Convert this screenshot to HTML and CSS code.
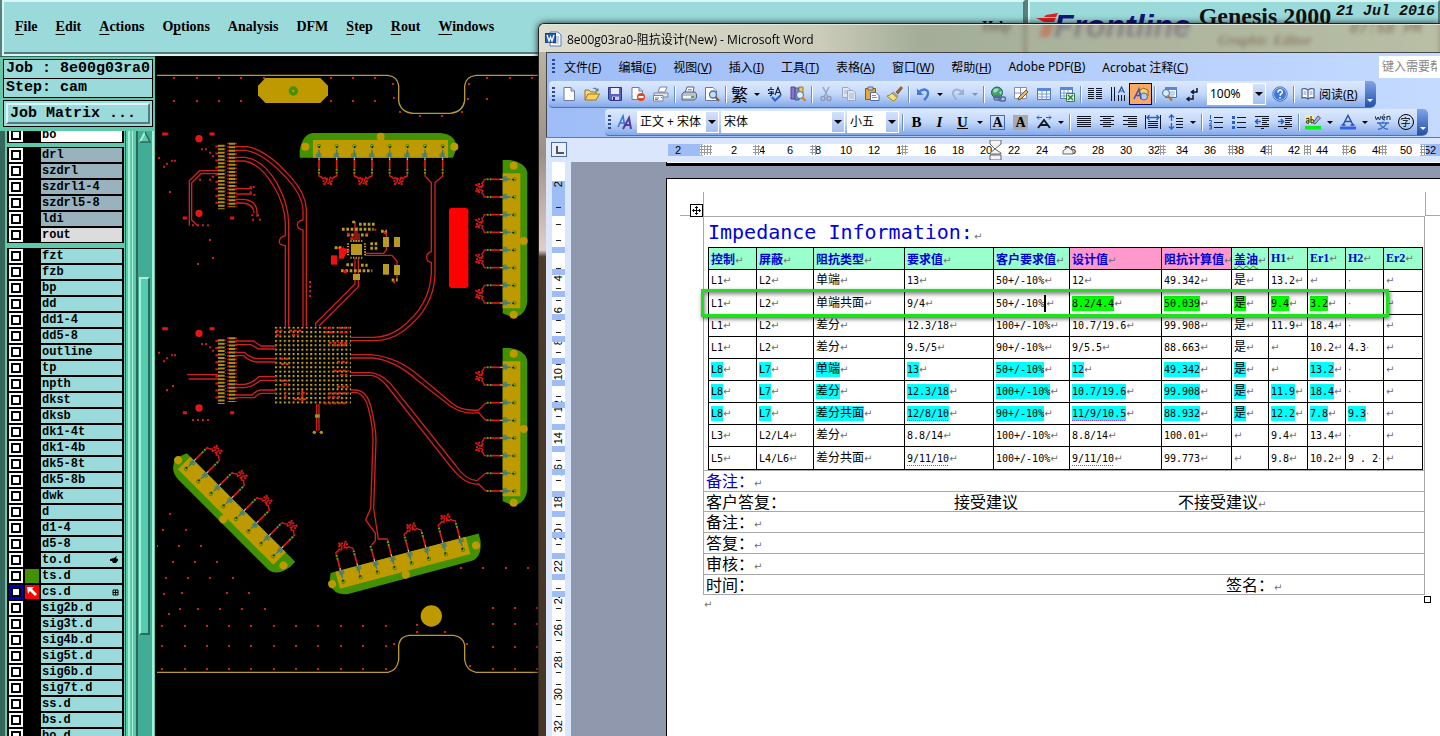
FILE: index.html
```html
<!DOCTYPE html>
<html lang="zh-CN">
<head>
<meta charset="utf-8">
<title>Genesis 2000 - Microsoft Word</title>
<link rel="stylesheet" href="styles.css">
</head>
<body>
<div class="genesis">
  <header class="gen-head">
    <nav class="gen-menu">
      <button><u>F</u>ile</button><button><u>E</u>dit</button><button><u>A</u>ctions</button><button>O<u>p</u>tions</button><button>Analysis</button><button>DFM</button><button><u>S</u>tep</button><button><u>R</u>out</button><button><u>W</u>indows</button><button class="help">Help</button>
    </nav>
    <div class="brand">
      <div class="logo">
        <svg width="22" height="24" viewBox="0 0 22 24"><path d="M10 2L22 0 20 4 8 4zM0 5H20L18 9H8zM5 11H18L13 24H3L7 13z" fill="#e02020"/></svg>
        <span>Frontline</span>
      </div>
      <div class="product"><strong>Genesis 2000</strong><em>Graphic Editor</em></div>
      <div class="clock"><span>21 Jul 2016</span><span>07:58 PM</span></div>
    </div>
  </header>
  <div class="gen-main">
    <aside class="side">
      <div class="field">Job : 8e00g03ra0</div>
      <div class="field">Step: cam</div>
      <div class="btn-frame"><button class="matrix">Job Matrix ...</button></div>
      <div class="layers">
        <div class="list">
          <div class="group first">
            <label class="row white"><input type="checkbox"><i></i><span>bo</span></label>
          </div>
          <div class="group gray">
            <label class="row"><input type="checkbox"><i></i><span>drl</span></label>
            <label class="row"><input type="checkbox"><i></i><span>szdrl</span></label>
            <label class="row"><input type="checkbox"><i></i><span>szdrl1-4</span></label>
            <label class="row"><input type="checkbox"><i></i><span>szdrl5-8</span></label>
            <label class="row"><input type="checkbox"><i></i><span>ldi</span></label>
            <label class="row pale"><input type="checkbox"><i></i><span>rout</span></label>
          </div>
          <div class="group">
            <label class="row"><input type="checkbox"><i></i><span>fzt</span></label>
            <label class="row"><input type="checkbox"><i></i><span>fzb</span></label>
            <label class="row"><input type="checkbox"><i></i><span>bp</span></label>
            <label class="row"><input type="checkbox"><i></i><span>dd</span></label>
            <label class="row"><input type="checkbox"><i></i><span>dd1-4</span></label>
            <label class="row"><input type="checkbox"><i></i><span>dd5-8</span></label>
            <label class="row"><input type="checkbox"><i></i><span>outline</span></label>
            <label class="row"><input type="checkbox"><i></i><span>tp</span></label>
            <label class="row"><input type="checkbox"><i></i><span>npth</span></label>
            <label class="row"><input type="checkbox"><i></i><span>dkst</span></label>
            <label class="row"><input type="checkbox"><i></i><span>dksb</span></label>
            <label class="row"><input type="checkbox"><i></i><span>dk1-4t</span></label>
            <label class="row"><input type="checkbox"><i></i><span>dk1-4b</span></label>
            <label class="row"><input type="checkbox"><i></i><span>dk5-8t</span></label>
            <label class="row"><input type="checkbox"><i></i><span>dk5-8b</span></label>
            <label class="row"><input type="checkbox"><i></i><span>dwk</span></label>
            <label class="row"><input type="checkbox"><i></i><span>d</span></label>
            <label class="row"><input type="checkbox"><i></i><span>d1-4</span></label>
            <label class="row"><input type="checkbox"><i></i><span>d5-8</span></label>
            <label class="row"><input type="checkbox"><i></i><span>to.d<svg width="9" height="8" viewBox="0 0 9 8"><path d="M0 3L4 2 7 0 6 2.500 8 3V4.500L6 7H3L2 5H0z"/></svg></span></label>
            <label class="row"><input type="checkbox"><i class="green"></i><span>ts.d</span></label>
            <label class="row"><input type="checkbox" checked><i class="red"><svg width="14" height="14" viewBox="0 0 14 14"><path d="M2 2H9L7 4 12 9 10 11 5 6 3 9z" fill="#fff"/></svg></i><span>cs.d<svg width="7" height="7" viewBox="0 0 7 7"><path d="M1 1H6V6H1zM3.500 1V6M1 3.500H6" fill="none" stroke="#000"/></svg></span></label>
            <label class="row"><input type="checkbox"><i></i><span>sig2b.d</span></label>
            <label class="row"><input type="checkbox"><i></i><span>sig3t.d</span></label>
            <label class="row"><input type="checkbox"><i></i><span>sig4b.d</span></label>
            <label class="row"><input type="checkbox"><i></i><span>sig5t.d</span></label>
            <label class="row"><input type="checkbox"><i></i><span>sig6b.d</span></label>
            <label class="row"><input type="checkbox"><i></i><span>sig7t.d</span></label>
            <label class="row"><input type="checkbox"><i></i><span>ss.d</span></label>
            <label class="row"><input type="checkbox"><i></i><span>bs.d</span></label>
            <label class="row"><input type="checkbox"><i></i><span>bo.d</span></label>
          </div>
        </div>
        <div class="rails"></div>
        <div class="scroll">
          <svg width="12" height="12" viewBox="0 0 12 12"><path d="M6 1L1 11H11z" fill="#5fc9ab"/><path d="M6 1L1 11" stroke="#a5efdb" stroke-width="2"/><path d="M6 1L11 11H1" stroke="#2a6a5c" stroke-width="1.500" fill="none"/></svg>
          <div class="thumb"></div>
        </div>
      </div>
    </aside>
    <main class="board">
      <svg width="383" height="679" viewBox="0 -3 383 679">
        <defs>
          <pattern id="bga" x="354" y="800" width="13.200" height="13.200" patternUnits="userSpaceOnUse"><rect width="6" height="6" fill="#c0a030"/></pattern>
          <g id="pin">
            <path d="M0 6L-6 32H6z" fill="#4a7f86"/><path d="M-8 32V24H8M-8 32H8M0 32V12" stroke="#4a7f60" stroke-width="3" fill="none"/>
            <circle r="5" fill="none" stroke="#419100" stroke-width="3"/><rect x="-1" width="4" height="6" fill="#201000"/>
            <path d="M0 38V68" stroke="#e01818" stroke-width="5"/><path d="M0 35V42" stroke="#ccc" stroke-width="3"/>
            <path d="M0 68V84" stroke="#6f9a18" stroke-width="6" stroke-dasharray="6 3"/>
          </g>
          <g id="body">
            <path d="M-18 -39H364Q408 -36 414 4L402 35H-58V14Q-50 -36 -18 -39z" fill="#419100"/>
            <path d="M-18 -18H387V35H-18z" fill="#bf9900"/>
            <circle cx="185" cy="-28" r="12" fill="#bf9900"/><circle cx="-41" cy="2" r="12" fill="#bf9900"/><circle cx="406" cy="2" r="12" fill="#bf9900"/>
            <use href="#pin"/><use href="#pin" x="53"/><use href="#pin" x="106"/><use href="#pin" x="159"/><use href="#pin" x="212"/><use href="#pin" x="265"/><use href="#pin" x="318"/><use href="#pin" x="371"/>
          </g>
          <g id="curl" fill="none" stroke="#e01818" stroke-width="4">
            <path d="M0 84V90Q8 92 12 98L18 94 24 104 18 112M53 84V90Q44 92 40 98L34 94 30 104 36 112"/>
            <path d="M14 106h.1M16 114h.1M24 98h.1M38 106h.1M36 114h.1M28 112h.1" stroke-width="6" stroke-linecap="square"/>
          </g>
          <g id="fpc">
            <path d="M180 2V192" stroke="#e01010" stroke-width="10" stroke-dasharray="6 15.200"/>
            <path d="M214 -6V188M236 -6V188" stroke="#e01010" stroke-width="7" stroke-dasharray="5 5.600"/>
            <path d="M193 0V194" stroke="#b08a20" stroke-width="20" stroke-dasharray="6 4.600"/>
            <path d="M225 -6V188" stroke="#b08a20" stroke-width="18" stroke-dasharray="6 4.600"/>
            <path d="M206 2V180" stroke="#d01818" stroke-width="3" stroke-dasharray="3 6"/>
            <circle cx="126" cy="-18" r="9" fill="#f01010"/><circle cx="126" cy="206" r="9" fill="#f01010"/>
            <path d="M20 -32h8M162 -32h6M82 220h3M224 220h3" stroke="#f01010" stroke-width="9" stroke-linecap="square"/>
            <path d="M135 14h.1M147 14h.1M159 24h.1M168 34h.1M21 66h.1M30 57h.1M45 48h.1M54 48h.1M6 40h.1M108 242h.1M123 242h.1M138 242h.1M153 242h.1" stroke="#c02020" stroke-width="6" stroke-linecap="square"/>
          </g>
        </defs>
        <g transform="scale(.333333)" fill="none" stroke="#d02020" stroke-width="4">
          <path d="M0 46H693Q722 50 725 77V122Q730 158 770 160H880Q918 156 923 122V77Q926 50 957 46H1143" stroke="#b89a30"/>
          <path d="M51 54h.1M120 54h.1M186 54h.1M252 54h.1M321 54h.1M522 54h.1M588 54h.1M654 54h.1M990 54h.1M1059 54h.1M1125 54h.1M708 72h.1M936 72h.1M51 123h.1M120 123h.1M186 123h.1M252 123h.1M522 123h.1M588 123h.1M654 123h.1M711 114h.1M933 117h.1M990 117h.1M729 156h.1M915 156h.1M789 168h.1M855 168h.1M39 396h.1M129 359h.1M159 359h.1M168 350h.1M159 540h.1M168 594h.1M123 612h.1M459 666h.1M459 680h.1M459 694h.1M459 708h.1" stroke-width="6" stroke-linecap="square"/>
          <path d="M325 54H490L513 77V106L490 129H325L303 106V77z" fill="#bf9900" stroke="none"/>
          <circle cx="409" cy="93" r="9" stroke="#419100" stroke-width="10"/>
          <use href="#body" x="486" y="258" stroke="none"/>
          <use href="#curl" x="486" y="258"/><use href="#curl" x="592" y="258"/><use href="#curl" x="698" y="258"/>
          <path d="M804 342V348L823 368V575Q808 580 809 593T823 607V640Q818 740 730 805Q690 832 650 832H582M857 342V348L834 368V640Q832 745 740 812Q700 842 650 842H582"/>
          <g transform="translate(1072 358) rotate(90)"><use href="#body" stroke="none"/><use href="#curl"/><use href="#curl" x="106"/><use href="#curl" x="212"/><use href="#curl" x="318"/></g>
          <rect x="876" y="444" width="58" height="240" rx="8" fill="#f00" stroke="none"/>
          <use href="#fpc" y="254"/>
          <path d="M236 260H270Q330 270 400 350Q447 400 448 450V800M236 271H268Q320 280 390 355Q436 405 438 450V480Q421 483 421 495T438 510V800M236 292H265Q320 300 360 370Q394 430 395 490V800M236 303H262Q310 310 350 378Q384 435 385 490V527Q369 530 367 543T385 557V800"/>
          <path d="M183 332H128L97 362V497M183 341H132L104 368V480L122 497M236 386H285M236 402H285M236 418H262Q298 422 300 455V470M236 429H258Q290 432 291 460"/>
          <path d="M281 381h.1M290 381h.1M281 397h.1M292 404h.1M286 466h.1M303 466h.1M309 479h.1M288 479h.1" stroke-width="6" stroke-linecap="square"/>
          <path d="M594 595V672L476 790V800M604 595V680L486 798M600 500V545M594 485V545M606 520V545M560 571H578M625 580H680L688 570V545M625 586H705L720 604V620M720 640V660M688 530V515H675"/>
          <g stroke="none" fill="#b89a20"><rect x="582" y="552" width="33" height="33"/><rect x="678" y="531" width="18" height="30"/><rect x="711" y="531" width="18" height="30"/><rect x="678" y="612" width="18" height="32"/><rect x="711" y="615" width="18" height="30"/><rect x="588" y="642" width="21" height="18"/></g>
          <g stroke="#b89a20" stroke-width="9"><path d="M606 493H658M555 508H650M570 525H590M612 525H634M640 551H664M640 565H664M533 563H560M568 614H588M612 616H632M552 632H646M590 490V480M672 514H690M704 660H722" stroke-dasharray="8 5"/><path d="M580 543H618M580 593H618" stroke-width="6" stroke-dasharray="4 4"/><path d="M573 550V588M624 550V588" stroke-width="6" stroke-dasharray="4 4"/></g>
          <g fill="#f01010" stroke="none"><rect x="522" y="586" width="18" height="28"/><path d="M546 570L552 562 570 566V575L560 596H546z"/><path d="M560 630h9v9h-9zM540 560h6v6h-6zM570 518h8v8h-8zM580 532h10v8h-10zM628 518h6v6h-6zM652 506h6v6h-6zM680 516h7v7h-7zM708 662h6v8h-6z"/></g>
          <rect x="354" y="800" width="228" height="232" fill="url(#bga)" stroke="none"/>
          <path d="M356 812H376M356 826H372M396 812H432M405 826H425M500 803H530M545 803H578M505 817H535M548 817H570M515 848H545M528 856H570M548 849H578M370 896H398M372 912H396M540 905H572M530 932H575M372 962H392M380 972H396M550 945H570M540 980H575M420 1000H450M515 1000H575M512 1012H555M410 1018H448M385 1015V995M436 990V1025M500 1030H570" stroke="#e82808" stroke-width="6" stroke-dasharray="9 5"/>
        </g>
        <g transform="translate(0 280) scale(.333333)" fill="none" stroke="#d02020" stroke-width="4">
          <use href="#fpc" y="-2"/>
          <path d="M235 3H290L312 18H357M235 14H282L305 27H357M235 37H262Q280 54 300 56H357M235 47H260Q278 64 300 66H357M235 133H262Q285 130 305 110H357M235 143H262Q290 140 310 121H357M235 165H285Q300 150 312 150H357M235 173H292Q305 160 315 160H357M90 104H183M95 117H183"/>
          <path d="M582 44H640Q720 50 790 110L885 190Q915 215 965 210L985 190H990M582 54H650Q715 62 780 120L880 198Q920 225 965 218L985 240H990M582 98H640Q670 100 700 130L895 375Q925 420 960 422L985 400H990M582 106H645Q668 110 690 138L885 385Q925 435 965 432L985 452H990"/>
          <path d="M582 150H600Q630 155 642 200Q656 260 657 300L650 505 664 597H690L696 608M582 158H600Q625 165 634 205Q648 260 648 300L641 505 626 540 655 580V602L644 615M479 192V272M486 192V272"/>
          <path d="M474 228H488" stroke="#8aa020" stroke-width="10"/><circle cx="472" cy="277" r="5" fill="#bf9900" stroke="none"/><circle cx="493" cy="277" r="5" fill="#bf9900" stroke="none"/>
          <g transform="translate(1072 82) rotate(90)"><use href="#body" stroke="none"/><use href="#curl"/><use href="#curl" x="212"/></g>
          <g transform="translate(349 649) rotate(225)"><use href="#body" stroke="none"/><use href="#curl"/><use href="#curl" x="106"/><use href="#curl" x="212"/><use href="#curl" x="318"/></g>
          <g transform="translate(918 629) rotate(165)"><use href="#body" stroke="none"/><use href="#curl"/><use href="#curl" x="106"/><use href="#curl" x="318"/></g>
          <circle cx="823" cy="828" r="32" fill="#bf9900" stroke="none"/>
          <path d="M0 997H693Q720 992 725 960V915Q730 888 757 886H890Q918 890 923 915V960Q928 992 957 997H1143" stroke="#b89a30"/>
          <path d="M39 522h.1M18 570h.1M87 570h.1M0 618h.1M66 618h.1M132 618h.1M48 666h.1M114 666h.1M180 666h.1M27 714h.1M93 714h.1M159 714h.1M228 714h.1M21 762h.1M75 759h.1M210 759h.1M276 759h.1M69 807h.1M123 807h.1M189 807h.1M255 807h.1M324 807h.1M36 822h.1M15 858h.1M84 858h.1M150 858h.1M216 858h.1M282 858h.1M351 858h.1M417 858h.1M483 858h.1M552 858h.1M618 858h.1M687 858h.1M15 918h.1M84 918h.1M150 918h.1M216 918h.1M282 918h.1M351 918h.1M417 918h.1M483 918h.1M552 918h.1M618 918h.1M687 918h.1M711 912h.1M15 987h.1M84 987h.1M150 987h.1M216 987h.1M282 987h.1M351 987h.1M417 987h.1M483 987h.1M552 987h.1M618 987h.1M687 987h.1M912 684h.1M978 684h.1M1047 684h.1M1113 684h.1M1008 804h.1M1074 804h.1M1140 804h.1M1008 852h.1M1074 852h.1M1140 852h.1M1008 921h.1M1074 921h.1M1140 921h.1M1008 987h.1M1074 987h.1M1140 987h.1M780 855h.1M780 876h.1M864 876h.1M930 912h.1M939 978h.1M30 150h.1M48 138h.1" stroke-width="6" stroke-linecap="square"/>
        </g>
      </svg>
    </main>
  </div>
</div>

<section class="word">
  <div class="title">
    <svg width="17" height="16" viewBox="0 0 17 16"><path d="M5 1H13L16 4V15H5z" fill="#fff" stroke="#5a78b0"/><path d="M8 6H14M8 8H14M8 10H14M8 12H14" stroke="#7fa0d8"/><rect x=".5" y="2.500" width="10" height="9" fill="#2b5fb4" stroke="#18407c"/><path d="M2 4L4 10 5.500 6 7 10 9 4" fill="none" stroke="#fff" stroke-width="1.300"/></svg>
    <span>8e00g03ra0-阻抗设计(New) - Microsoft Word</span>
  </div>
  <div class="word-body">
    <div class="menubar">
      <i class="grip"></i>
      <button>文件(<u>F</u>)</button><button>编辑(<u>E</u>)</button><button>视图(<u>V</u>)</button><button>插入(<u>I</u>)</button><button>工具(<u>T</u>)</button><button>表格(<u>A</u>)</button><button>窗口(<u>W</u>)</button><button>帮助(<u>H</u>)</button><button>Adobe PDF(<u>B</u>)</button><button>Acrobat 注释(<u>C</u>)</button>
      <input type="text" aria-label="帮助" placeholder="键入需要帮助的问题">
    </div>

    <div class="bar standard">
      <i class="grip"></i>
      <button aria-label="新建"><svg viewBox="0 0 16 16"><path d="M3 1.500H10L13.500 5V14.500H3z" fill="#fff" stroke="#6878a8"/><path d="M10 1.500V5H13.500" fill="#c8d8f4" stroke="#6878a8"/></svg></button>
      <button aria-label="打开"><svg viewBox="0 0 16 16"><path d="M1 14V4H5L7 6H12V8" fill="#f8d878" stroke="#9a7420"/><path d="M1 14L4 8H15.500L12 14z" fill="#fdd35a" stroke="#9a7420"/><path d="M8 3Q11 0 13 3L14.500 2V5.500H11L12 4Q10.500 2 8 3z" fill="#6a7c94"/></svg></button>
      <button aria-label="保存"><svg viewBox="0 0 16 16"><path d="M1.500 1.500H14.500V14.500H3L1.500 13z" fill="#5a62c4" stroke="#2c3488"/><path d="M4 2H12V8H4z" fill="#e8eefc"/><path d="M5 10.500H12V14H5z" fill="#c8cce8"/><path d="M6 11H8V14H6z" fill="#2c3488"/></svg></button>
      <button aria-label="权限"><svg viewBox="0 0 16 16"><path d="M2 1.500H9L12.500 5V13.500H2z" fill="#fff" stroke="#6878a8"/><path d="M9 1.500V5H12.500" fill="#c8d8f4" stroke="#6878a8"/><circle cx="11" cy="11" r="4" fill="#e04820"/><path d="M8.500 11H13.500" stroke="#fff" stroke-width="1.800"/></svg></button>
      <button aria-label="邮件"><svg viewBox="0 0 16 16"><path d="M5 6L7 1H14L12 6z" fill="#fff" stroke="#7c8494"/><path d="M1 7H15V11H1z" fill="#e0e4ec" stroke="#7c8494"/><path d="M.5 9.500H10V15H.5z" fill="#fff" stroke="#7c8494"/><path d="M2 12H6M2 13.500H5" stroke="#68789c"/><path d="M8 11h1v1h-1z" fill="#c03030"/></svg></button>
      <i class="sep"></i>
      <button aria-label="打印"><svg viewBox="0 0 16 16"><path d="M4 7L6 1H13L12 7z" fill="#fff" stroke="#56657e"/><path d="M1 8L3 6H14L15.500 8V12L13 14H1z" fill="#b8c0cc" stroke="#56657e"/><path d="M2 10H10V12H2z" fill="#f4f6fa"/><path d="M10 10H13V12H10z" fill="#2fba48"/><path d="M7 3.500H11M6.500 5H10.500" stroke="#8aa0c8"/></svg></button>
      <button aria-label="预览"><svg viewBox="0 0 16 16"><path d="M1.500 1.500H9L12.500 5V14.500H1.500z" fill="#fff" stroke="#6878a8"/><circle cx="9" cy="8.500" r="3.500" fill="#bfe0f8" stroke="#5a6c8c" stroke-width="1.300"/><path d="M11.500 11L15 15" stroke="#8c5a28" stroke-width="2"/></svg></button>
      <i class="sep"></i>
      <button class="han" aria-label="繁简转换">繁</button><button class="drop" aria-label="更多"></button>
      <button aria-label="拼写"><svg viewBox="0 0 16 16"><path d="M1 3.500H7M4 1V3.500M1.500 3.500V5M2 6H7M4.500 5V9L3 10M1 7.500H7M8 9L11 1.500 14 9M9 6.500H13" fill="none" stroke="#182848" stroke-width="1.200"/><path d="M5 11L8 14.500 14 9" fill="none" stroke="#2860d0" stroke-width="2"/></svg></button>
      <button aria-label="信息检索"><svg viewBox="0 0 16 16"><path d="M1 1H5V13H1z" fill="#9470c0" stroke="#5c3c90"/><path d="M5 2H9V14H5z" fill="#6a90d8" stroke="#3a5ca0"/><path d="M9 1H13V8H9z" fill="#f0c860" stroke="#a07820"/><circle cx="10" cy="9" r="3.500" fill="#dff0fc" stroke="#5a6c8c"/><path d="M12.500 11.500L15.500 15" stroke="#d08020" stroke-width="2"/></svg></button>
      <i class="sep"></i>
      <button aria-label="剪切"><svg viewBox="0 0 16 16"><path d="M5 1L10 11M11 1L6 11" stroke="#9aa8c4" stroke-width="1.600"/><circle cx="5" cy="12.500" r="2" fill="none" stroke="#8d9bbd" stroke-width="1.500"/><circle cx="11" cy="12.500" r="2" fill="none" stroke="#8d9bbd" stroke-width="1.500"/></svg></button>
      <button aria-label="复制"><svg viewBox="0 0 16 16"><path d="M1.500 1.500H7L9.500 4V11.500H1.500z" fill="#dfe6f4" stroke="#9aa8c4"/><path d="M6.500 4.500H12L14.500 7V14.500H6.500z" fill="#dfe6f4" stroke="#9aa8c4"/><path d="M8 8H13M8 10H13M8 12H13M3 5H6M3 7H6" stroke="#a8b4cc"/></svg></button>
      <button aria-label="粘贴"><svg viewBox="0 0 16 16"><path d="M1.500 2.500H11.500V13.500H1.500z" fill="#e8a838" stroke="#8a5c14"/><path d="M4 1H9V4H4z" fill="#c8ccd8" stroke="#606878"/><path d="M6.500 6.500H12L15 9.500V14.500H6.500z" fill="#fff" stroke="#5068a0"/><path d="M8 9.500H12M8 11.500H13" stroke="#7890c8"/></svg></button>
      <button aria-label="格式刷"><svg viewBox="0 0 16 16"><path d="M9 6L14 .5 15.500 2 11 8z" fill="#9a6438" stroke="#6a4020" stroke-width=".6"/><path d="M6 5L12 10 10.500 11.500 5 7z" fill="#98a4b8"/><path d="M5 7L10 11.500Q8 15 6 15L0 10Q3 9.500 5 7z" fill="#f4e078" stroke="#a08828"/></svg></button>
      <i class="sep"></i>
      <button aria-label="撤消"><svg viewBox="0 0 16 16"><path d="M4 6Q9 1.500 12.500 5Q14.500 9 9 14" fill="none" stroke="#4878d0" stroke-width="2.400"/><path d="M2 2.500V9H8.500z" fill="#4878d0"/></svg></button><button class="drop" aria-label="更多"></button>
      <button aria-label="恢复"><svg viewBox="0 0 16 16"><path d="M12 6Q7 1.500 3.500 5Q1.500 9 7 14" fill="none" stroke="#9db0d4" stroke-width="2"/><path d="M14 2.500V9H7.500z" fill="#9db0d4"/></svg></button><button class="drop dim" aria-label="更多"></button>
      <i class="sep"></i>
      <button aria-label="超链接"><svg viewBox="0 0 16 16"><circle cx="7" cy="6.500" r="5.500" fill="#4aa058" stroke="#28604c"/><path d="M3 4Q6 1 9 3L7 6 4 7zM9 6L12 5 11 9z" fill="#90d8f0"/><rect x="4" y="10" width="7" height="4" rx="2" fill="none" stroke="#506c9c" stroke-width="1.500"/><rect x="9" y="11" width="6.500" height="4" rx="2" fill="none" stroke="#506c9c" stroke-width="1.500"/></svg></button>
      <button aria-label="表格和边框"><svg viewBox="0 0 16 16"><path d="M1.500 1.500H13.500V12.500H1.500zM1.500 7H13.500M7.500 1.500V12.500" fill="#fff" stroke="#8090b4"/><path d="M5 14L6 11 13 4 15 6 8 13z" fill="#f0b860" stroke="#7a5428"/></svg></button>
      <button aria-label="插入表格"><svg viewBox="0 0 16 16"><path d="M1.500 2.500H14.500V13.500H1.500z" fill="#fff" stroke="#4870b8"/><path d="M1 2H15V5H1z" fill="#5888d8"/><path d="M1.500 8H14.500M1.500 11H14.500M6 5V14M10.500 5V14" stroke="#7c9cd4"/></svg></button>
      <button aria-label="插入Excel"><svg viewBox="0 0 16 16"><path d="M1.500 1.500H13.500V12.500H1.500z" fill="#fff" stroke="#4870b8"/><path d="M1 1H14V4H1z" fill="#5888d8"/><path d="M1.500 7H13.500M1.500 10H13.500M5 4V13M9 4V13" stroke="#7c9cd4"/><path d="M7.500 7.500H15.500V15.500H7.500z" fill="#e8f6e8" stroke="#2c8040"/><path d="M9 9L14 14M14 9L9 14" stroke="#2c8040" stroke-width="1.600"/></svg></button>
      <i class="sep"></i>
      <button aria-label="分栏"><svg viewBox="0 0 16 16"><path d="M1 2.500H7M1 4.500H7M1 6.500H7M1 8.500H7M1 10.500H7M1 12.500H7M9 2.500H15M9 4.500H15M9 6.500H15M9 8.500H15M9 10.500H15M9 12.500H15" stroke="#101828"/></svg></button>
      <button aria-label="文字方向"><svg viewBox="0 0 16 16"><path d="M1.500 1V15M4.500 1V15M8.500 9V15M11.500 9V15M14.500 9V15" stroke="#101828"/><path d="M8.500 7L11.500 1 14.500 7M9.500 5H13.500" fill="none" stroke="#2850a8" stroke-width="1.200"/></svg></button>
      <button class="active" aria-label="绘图"><svg viewBox="0 0 16 16"><path d="M6 5L10 2 15 4V10L10 13z" fill="#f4d080" stroke="#906828"/><circle cx="11" cy="10.500" r="3.500" fill="#b8c8e8" stroke="#5068a0"/><path d="M1 13L6 3 8 13M3 9.500H7.500" fill="none" stroke="#3858c0" stroke-width="1.600"/></svg></button>
      <i class="sep"></i>
      <button aria-label="文档结构图"><svg viewBox="0 0 16 16"><path d="M4.500 1.500H15.500V11.500H4.500z" fill="#fff" stroke="#4870b8"/><path d="M4 1H16V4H4z" fill="#5888d8"/><path d="M8 6H14M8 8H14M8 10H13" stroke="#90a8d4"/><circle cx="5" cy="7" r="3.500" fill="#d4ecfc" stroke="#5a6c8c"/><path d="M7 10L11 14.500" stroke="#b07030" stroke-width="2"/></svg></button>
      <button aria-label="显示段落标记"><svg viewBox="0 0 16 16"><path d="M13 2V6H8M10 4L7.500 6 10 8M9 9V13H3M5.500 11L3 13 5.500 15" fill="none" stroke="#101828" stroke-width="1.500"/></svg></button>
      <label class="combo zoom"><select aria-label="显示比例"><option>100%</option></select></label>
      <button aria-label="帮助"><svg viewBox="0 0 16 16"><circle cx="8" cy="8" r="6.500" fill="#3f78d8" stroke="#c8dcf8"/><circle cx="8" cy="8" r="7.200" fill="none" stroke="#2c58b0" stroke-width=".8"/><path d="M5.800 6.500Q6 4 8.200 4T10.300 6.500Q10 7.600 8.500 8.200L8 9.800M8 11V12.500" fill="none" stroke="#fff" stroke-width="1.500"/></svg></button>
      <i class="sep"></i>
      <button class="read"><svg viewBox="0 0 16 16"><path d="M8 4Q5 2 2 3V12Q5 11 8 13Q11 11 14 12V3Q11 2 8 4V13" fill="#fff" stroke="#46608c" stroke-width="1.200"/><path d="M3.500 6H6.500M3.500 8H6.500M9.500 6H12.500M9.500 8H12.500" stroke="#7890b8"/></svg><span>阅读(<u>R</u>)</span></button>
      <button class="cap" aria-label="工具栏选项"></button>
    </div>

    <div class="bar format">
      <i class="grip"></i>
      <button aria-label="样式"><svg viewBox="0 0 16 16"><path d="M1 13L6 2 8 13M3 9H7.500" fill="none" stroke="#3878d8" stroke-width="1.600"/><path d="M6 15L12 4 14 15M8.500 11H13.500" fill="none" stroke="#5a3c98" stroke-width="2"/></svg></button>
      <label class="combo style"><select aria-label="样式"><option>正文 + 宋体</option></select></label>
      <label class="combo face"><select aria-label="字体"><option>宋体</option></select></label>
      <label class="combo size"><select aria-label="字号"><option>小五</option></select></label>
      <i class="sep"></i>
      <button class="ltr"><b>B</b></button><button class="ltr"><em>I</em></button><button class="ltr"><u>U</u></button><button class="drop" aria-label="更多"></button>
      <button class="ltr boxed"><span>A</span></button><button class="ltr shaded"><span>A</span></button>
      <button aria-label="字符缩放"><svg viewBox="0 0 16 16"><path d="M2 14L8 6 14 14M4.500 11H11.500" fill="none" stroke="#101828" stroke-width="1.800"/><path d="M1 3.500H6M10 3.500H15M3 1.500L1 3.500 3 5.500M13 1.500L15 3.500 13 5.500" fill="none" stroke="#2860c0"/></svg></button><button class="drop" aria-label="更多"></button>
      <i class="sep"></i>
      <button aria-label="两端对齐"><svg viewBox="0 0 16 16"><path d="M1 2.500H15M1 4.500H15M1 6.500H15M1 8.500H15M1 10.500H15M1 12.500H15" stroke="#101828"/></svg></button>
      <button aria-label="居中"><svg viewBox="0 0 16 16"><path d="M1 2.500H15M4 4.500H12M1 6.500H15M4 8.500H12M1 10.500H15M4 12.500H12" stroke="#101828"/></svg></button>
      <button aria-label="右对齐"><svg viewBox="0 0 16 16"><path d="M1 2.500H15M6 4.500H15M1 6.500H15M6 8.500H15M1 10.500H15M6 12.500H15" stroke="#101828"/></svg></button>
      <button aria-label="分散对齐"><svg viewBox="0 0 16 16"><path d="M.5 1V15M15.500 1V15M3 7.500H13M3 9.500H13M3 11.500H13M3 13.500H13" stroke="#101828"/><path d="M2 3.500H14M4.500 1L2 3.500 4.500 6M11.500 1L14 3.500 11.500 6" fill="none" stroke="#2860c0" stroke-width="1.300"/></svg></button>
      <button aria-label="行距"><svg viewBox="0 0 16 16"><path d="M8 4.500H15M8 7.500H15M8 10.500H15M8 13.500H15" stroke="#101828"/><path d="M3.500 1V7M1 3.500L3.500 1 6 3.500M3.500 9V15M1 12.500L3.500 15 6 12.500" fill="none" stroke="#2860c0" stroke-width="1.300"/></svg></button><button class="drop" aria-label="更多"></button>
      <i class="sep"></i>
      <button aria-label="编号"><svg viewBox="0 0 16 16"><path d="M6 3.500H15M6 8.500H15M6 13.500H15" stroke="#101828"/><path d="M2.500 1V5M1 6.500H3.500V8L1.500 10H4M1 11.500H3.500V15H1M1.500 13H3.500" fill="none" stroke="#2860c0"/></svg></button>
      <button aria-label="项目符号"><svg viewBox="0 0 16 16"><path d="M6 3.500H15M6 8.500H15M6 13.500H15" stroke="#101828"/><path d="M1 2h3v3h-3zM1 7h3v3h-3zM1 12h3v3h-3z" fill="#2860c0"/></svg></button>
      <button aria-label="减少缩进"><svg viewBox="0 0 16 16"><path d="M1 2.500H15M8 4.500H15M8 6.500H15M8 8.500H13M8 10.500H15M1 12.500H15M7 14.500H10" stroke="#101828"/><path d="M7 7.500H2M4 5L1.500 7.500 4 10" fill="none" stroke="#2860c0" stroke-width="1.500"/></svg></button>
      <button aria-label="增加缩进"><svg viewBox="0 0 16 16"><path d="M1 2.500H15M8 4.500H15M8 6.500H15M8 8.500H13M8 10.500H15M1 12.500H15M7 14.500H10" stroke="#101828"/><path d="M1 7.500H6M4 5L6.500 7.500 4 10" fill="none" stroke="#2860c0" stroke-width="1.500"/></svg></button>
      <i class="sep"></i>
      <button aria-label="突出显示"><svg viewBox="0 0 16 16"><path d="M0 1H9V10H0z" fill="#f8f080"/><path d="M1 5Q4 3 4 5V9Q1 10 1 8T4 7M6 2V9Q9 9 9 7T6 6" fill="none" stroke="#202020"/><path d="M8 9L13 2 15.500 4 10 10z" fill="#a8b4cc" stroke="#505c78"/><path d="M0 12H16V15.500H0z" fill="#00f018"/></svg></button><button class="drop" aria-label="更多"></button>
      <button aria-label="字体颜色"><svg viewBox="0 0 16 16"><path d="M3 11L8 1.500 13 11M5 7.500H11M1.500 11H5.500M10.500 11H14.500" fill="none" stroke="#2c50a0" stroke-width="1.500"/><path d="M0 12.500H16V15.500H0z" fill="#3060f0"/></svg></button><button class="drop" aria-label="更多"></button>
      <button class="wen" aria-label="拼音指南"><svg viewBox="0 0 16 16"><path d="M0 2L1.500 6 3 3 4.500 6 6 2M7 4H10Q10 2 8.500 2T7 4T10 6M12 6V2M12 3Q15 1 15 3V6M8.500 1L10 -.5" fill="none" stroke="#182848"/><path d="M2 9H14M8 7.500V9M4 9Q7 14 13 15.500M12 9Q9 14 3 15.500" fill="none" stroke="#3868d0" stroke-width="1.300"/></svg></button>
      <button class="ring" aria-label="带圈字符"><span>字</span></button>
      <button class="cap" aria-label="工具栏选项"></button>
    </div>

    <div class="ruler-row">
      <div class="corner"><button aria-label="制表符"></button></div>
      <div class="ruler">
        <span class="edge">2</span>
        <span>2</span><span>4</span><span>6</span><span>8</span><span>10</span><span>12</span><span>14</span><span>16</span><span>18</span><span>20</span><span>22</span><span>24</span><span>26</span><span>28</span><span>30</span><span>32</span><span>34</span><span>36</span><span>38</span><span>40</span><span>42</span><span>44</span><span>46</span><span>48</span><span>50</span>
        <span class="rest">52</span>
        <svg class="marks" width="772" height="20" viewBox="0 0 772 20">
          <defs><pattern id="hatch" width="3" height="3" patternUnits="userSpaceOnUse"><rect width="3" height="3" fill="#fff"/><path d="M0 .5H3M.5 0V3" stroke="#999"/></pattern></defs>
          <g fill="url(#hatch)"><path d="M32 5h12v10h-12zM85 5h7v10h-7zM142 5h6v10h-6zM233 5h7v10h-7zM491 5h7v10h-7zM560 5h7v10h-7zM597 5h7v10h-7zM636 5h7v10h-7zM674 5h7v10h-7zM712 5h7v10h-7zM752 5h6v10h-6z"/></g>
          <path d="M322 0H333V4L327 9 322 4zM322 14V13L327 9 333 13V14zM322 15H333V20H322z" fill="#f4f4f4" stroke="#666"/>
          <path d="M395 14V11L400 7 405 11V14z" fill="#f4f4f4" stroke="#666"/>
        </svg>
      </div>
    </div>

    <div class="work">
      <div class="vruler">
        <div class="edge"><span>2</span></div>
        <div class="gap"></div>
        <div><span>4</span></div><div><span>6</span></div><div><span>8</span></div><div><span>10</span></div><div><span>12</span></div><div><span>14</span></div><div><span>16</span></div><div><span>18</span></div><div><span>20</span></div><div><span>22</span></div><div><span>24</span></div><div><span>26</span></div><div><span>28</span></div><div><span>30</span></div><div><span>32</span></div>
        <svg class="vmarks" width="13" height="440" viewBox="0 0 13 440"><path d="M0 66h13v6H0zM0 88h13v6H0zM0 110h13v6H0zM0 133h13v6H0zM0 155h13v6H0zM0 177h13v6H0zM0 199h13v6H0zM0 221h13v6H0zM0 243h13v6H0zM0 265h13v6H0zM0 288h13v6H0zM0 310h13v6H0zM0 330h13v6H0zM0 351h13v6H0zM0 372h13v6H0zM0 393h13v6H0zM0 410h13v6H0z" fill="#9ebcf6"/></svg>
      </div>
      <div class="doc">
        <div class="prev"></div>
        <article class="page">
          <div class="sheet-wrap">
            <span class="move"><svg width="13" height="13" viewBox="0 0 13 13"><rect x=".5" y=".5" width="12" height="12" fill="#fff" stroke="#000"/><path d="M6.500 2.500V10.500M2.500 6.500H10.500M5 4L6.500 2.500 8 4M5 9L6.500 10.500 8 9M4 5L2.500 6.500 4 8M9 5L10.500 6.500 9 8" fill="none" stroke="#000"/></svg></span>
            <i class="crop left"></i><i class="crop right"></i>
            <table class="sheet">
              <tr><td class="main">
                <h1>Impedance Information:</h1>
                <table class="data">
                  <colgroup><col class="c1"><col class="c2"><col class="c3"><col class="c4"><col class="c5"><col class="c6"><col class="c7"><col class="c8"><col class="c9"><col class="c10"><col class="c10"><col class="c9"></colgroup>
                  <tr><th>控制</th><th>屏蔽</th><th>阻抗类型</th><th>要求值</th><th>客户要求值</th><th class="pink">设计值</th><th class="pink">阻抗计算值</th><th><span class="wavy">盖油</span></th><th class="lat">H1</th><th class="lat">Er1</th><th class="lat">H2</th><th class="lat">Er2</th></tr>
                  <tr><td>L1</td><td>L2</td><td>单端</td><td>13</td><td>50+/-10%</td><td>12</td><td>49.342</td><td>是</td><td>13.2</td><td></td><td class="tiny"></td><td></td></tr>
                  <tr class="hl tall"><td>L1</td><td>L2</td><td>单端共面</td><td>9/4</td><td class="caret">50+/-10%</td><td><mark>8.2/4.4</mark></td><td><mark>50.039</mark></td><td><mark>是</mark></td><td><mark>9.4</mark></td><td><mark>3.2</mark></td><td class="tiny"></td><td></td></tr>
                  <tr><td>L1</td><td>L2</td><td>差分</td><td>12.3/18</td><td>100+/-10%</td><td>10.7/19.6</td><td>99.908</td><td>是</td><td>11.9</td><td>18.4</td><td class="tiny"></td><td></td></tr>
                  <tr><td>L1</td><td>L2</td><td>差分</td><td>9.5/5</td><td>90+/-10%</td><td>9/5.5</td><td>88.663</td><td>是</td><td></td><td>10.2</td><td class="tiny">4.3</td><td></td></tr>
                  <tr class="cy"><td><mark>L8</mark></td><td><mark>L7</mark></td><td><mark>单端</mark></td><td><mark>13</mark></td><td><mark>50+/-10%</mark></td><td><mark>12</mark></td><td><mark>49.342</mark></td><td><mark>是</mark></td><td></td><td><mark>13.2</mark></td><td class="tiny"></td><td></td></tr>
                  <tr class="cy"><td><mark>L8</mark></td><td><mark>L7</mark></td><td><mark>差分</mark></td><td><mark>12.3/18</mark></td><td><mark>100+/-10%</mark></td><td><mark>10.7/19.6</mark></td><td><mark>99.908</mark></td><td><mark>是</mark></td><td><mark>11.9</mark></td><td><mark>18.4</mark></td><td class="tiny"></td><td></td></tr>
                  <tr class="cy"><td><mark>L8</mark></td><td><mark>L7</mark></td><td><mark>差分共面</mark></td><td><mark class="dots">12/8/10</mark></td><td><mark>90+/-10%</mark></td><td><mark class="dots">11/9/10.5</mark></td><td><mark>88.932</mark></td><td><mark>是</mark></td><td><mark>12.2</mark></td><td><mark>7.8</mark></td><td class="tiny"><mark>9.3</mark></td><td></td></tr>
                  <tr><td>L3</td><td>L2/L4</td><td>差分</td><td>8.8/14</td><td>100+/-10%</td><td>8.8/14</td><td>100.01</td><td></td><td>9.4</td><td>13.4</td><td class="tiny"></td><td></td></tr>
                  <tr class="tall"><td>L5</td><td>L4/L6</td><td>差分共面</td><td><span class="dots">9/11/10</span></td><td>100+/-10%</td><td><span class="dots">9/11/10</span></td><td>99.773</td><td></td><td>9.8</td><td>10.2</td><td class="tiny">9 . 2</td><td></td></tr>
                </table>
              </td></tr>
              <tr><td class="note blue"><p><span class="ret">备注：</span></p></td></tr>
              <tr class="low"><td class="note"><p><span class="w1">客户答复：</span><span class="w2">接受建议</span><span class="ret">不接受建议</span></p></td></tr>
              <tr><td class="note"><p><span class="ret">备注：</span></p></td></tr>
              <tr><td class="note"><p><span class="ret">答复：</span></p></td></tr>
              <tr><td class="note"><p><span class="ret">审核：</span></p></td></tr>
              <tr class="low"><td class="note"><p><span class="w3">时间：</span><span class="ret">签名：</span></p></td></tr>
            </table>
            <p class="end ret"></p>
            <i class="resize"></i>
            <div class="callout"></div>
          </div>
        </article>
      </div>
    </div>
  </div>
</section>
</body>
</html>
```
FILE: styles.css
```css
* { box-sizing: border-box; }
body { margin: 0; height: 100vh; overflow: hidden; background: #000; position: relative; font-family: "Noto Sans", "Noto Sans CJK SC", sans-serif; font-size: 12px; }
button { border: 0; padding: 0; background: none; font: inherit; color: inherit; }
p { margin: 0; }
svg { display: block; flex: none; }

/* Genesis application */
.genesis { height: 100%; display: flex; flex-direction: column; }
.gen-head { flex: none; display: flex; gap: 3px; height: 56px; padding-left: 2px; background: #58807e; }
.gen-menu, .brand { background: #9bdada; border-style: solid; border-width: 2px; border-color: #d8f6f4 #547c7c #d8f6f4 #d8f6f4; box-shadow: inset 0 -2px #547c7c; }
.gen-menu { flex: 1; display: flex; align-items: center; gap: 18px; padding: 0 12px 3px 11px; font: bold 14px "Liberation Serif", serif; }
.gen-menu u { text-underline-offset: 3px; }
.help { margin-left: auto; }
.brand { width: 412px; display: flex; padding: 1px 0 0 6px; color: #111; }
.logo { display: flex; width: 161px; padding-top: 10px; }
.logo span { font: italic bold 32px/26px "Liberation Sans", sans-serif; color: #16167c; margin-left: -4px; }
.product { display: flex; flex-direction: column; align-items: center; width: 136px; font-family: "Liberation Serif", serif; white-space: nowrap; }
.product strong { font-size: 24px; line-height: 26px; }
.product em { font-size: 15px; font-weight: bold; line-height: 22px; }
.clock { display: flex; flex-direction: column; align-items: center; flex: 1; font: italic bold 15px/18px "Liberation Mono", monospace; white-space: nowrap; }
.gen-main { flex: 1; display: flex; min-height: 0; }
.side { width: 155px; flex: none; display: flex; flex-direction: column; background: #5fc9ab; padding: 2px 2px 0 3px; border-top: 1px solid #2a6a5c; }
.field { height: 20px; flex: none; border: 1px solid #000; background: #9bdada; font: bold 15px/18px "Liberation Mono", monospace; padding-left: 2px; white-space: nowrap; overflow: hidden; margin-bottom: -1px; }
.btn-frame { flex: none; margin-top: 3px; border: 1px solid #000; background: #9bdada; padding: 2px; height: 27px; }
.matrix { display: block; width: 100%; height: 21px; border: 2px solid; border-color: #d8f6f4 #547c7c #547c7c #d8f6f4; background: #9bdada; font: bold 15px/17px "Liberation Mono", monospace; text-align: left; padding-left: 2px; }
.layers { flex: 1; min-height: 0; display: flex; margin: 4px 0 0 -3px; border-left: 5px solid #34685c; }
.list { width: 119px; flex: none; overflow: hidden; border-left: 2px solid #5fc9ab; margin-right: 1px; }
.group { background: #000; margin-bottom: 5px; padding-left: 1px; }
.group.first { margin-top: -4px; margin-bottom: 4px; }
.row { display: grid; grid-template-columns: 14px 14px 81px; column-gap: 2px; height: 16px; padding: 1px; }
.row input { appearance: none; margin: 0; width: 14px; height: 14px; background: #fff; border: 2px solid #fff; box-shadow: inset 0 0 0 2px #000; }
.row input:checked { border-color: #0000b8; }
.row i.green { background: #419100; }
.row i.red { background: #f00; }
.row span { display: flex; align-items: center; justify-content: space-between; background: #9bdada; font: bold 12px/14px "Liberation Mono", monospace; padding: 0 3px 0 1px; }
.row.white span { background: #fff; }
.gray .row span { background: #98b2be; }
.gray .row.pale span { background: #dcdcdc; }
.rails { width: 11px; flex: none; background: linear-gradient(90deg, #2a6a5c 1px, #5fc9ab 1px 3px, #a5efdb 3px 5px, #5fc9ab 5px 7px, #a5efdb 7px 8px, #5fc9ab 8px); }
.scroll { flex: 1; background: #43ac94; border-left: 2px solid #2a6a5c; border-right: 2px solid #a5efdb; padding: 0 1px; }
.thumb { width: 11px; height: 358px; margin-top: 134px; background: #54ccae; border: 2px solid; border-color: #a5efdb #2a6a5c #2a6a5c #a5efdb; }
.board { flex: 1; padding: 1px 0 0 2px; overflow: hidden; }

/* Word window */
.word { position: absolute; top: 23px; left: 538px; right: 0; bottom: 0; display: flex; flex-direction: column; border-left: 1px solid #222; border-top: 1px solid #222; border-radius: 6px 0 0 0; background: none; box-shadow: 0 0 7px rgba(0,0,0,.8); overflow: hidden; }
.title { flex: none; height: 28px; display: flex; align-items: center; gap: 5px; padding-left: 6px; background: linear-gradient(90deg, rgba(224,222,208,.97), rgba(206,203,184,.95) 280px, rgba(166,158,130,.75) 380px, rgba(196,180,144,.72)); backdrop-filter: blur(2px); border-top: 1px solid #e8e6da; font-size: 12px; }
.title span { font-family: "Open Sans", "Noto Sans CJK SC", sans-serif; font-size: 12px; }
.word-body { flex: 1; min-height: 0; display: flex; flex-direction: column; border-left: 7px solid; border-image: linear-gradient(#b8b4a4, #9c9086 15%, #e0cfc8 29%, #4c3a2a 30%, #463424) 1; background: linear-gradient(90deg, #9ebcf6, #c4daff); box-shadow: inset 1px 1px #444; }
.menubar { flex: none; height: 29px; display: flex; align-items: center; padding-left: 6px; }
.menubar button { margin-left: 9px; margin-right: 8px; white-space: nowrap; }
.menubar input { width: 61px; height: 22px; margin-left: auto; border: 0; padding: 0 3px; font: inherit; }
.menubar input::placeholder { color: #888; }
.grip { width: 3px; height: 15px; flex: none; background: repeating-linear-gradient(#2c4a90 0 2px, transparent 2px 4px); }
.bar { flex: none; height: 27px; display: flex; align-items: center; background: linear-gradient(#dce9fe, #c3d8fa 50%, #84a8e8); border-bottom: 1px solid #4d72b8; border-radius: 4px 6px 6px 4px; padding-left: 3px; align-self: flex-start; margin-bottom: 1px; }
.standard { margin-left: 3px; }
.format { margin-left: 59px; }
.bar button { width: 23px; height: 24px; flex: none; display: flex; align-items: center; justify-content: center; }
.bar svg { width: 16px; height: 16px; }
.bar .sep { width: 1px; height: 17px; flex: none; margin: 0 2px; background: #6a8ccc; box-shadow: 1px 0 #fff; }
.bar .drop { width: 12px; }
.drop::before { content: ""; border: 3px solid transparent; border-top-color: #000; border-bottom: 0; }
.drop.dim::before { border-top-color: #8090b0; }
.bar .grip + button { margin-left: 2px; }
.bar .han { font: 17px/20px "Noto Sans CJK SC", sans-serif; }
.bar .active { background: #fba860; border: 1px solid #000080; height: 22px; }
.combo { display: flex; background: #fff; height: 22px; flex: none; position: relative; align-items: center; margin: 0 1px; }
.combo select { appearance: none; border: 0; background: none; font: 12px/20px "Noto Sans", "Noto Sans CJK SC", sans-serif; padding: 0 0 0 3px; flex: 1; min-width: 0; margin-right: 14px; color: #000; }
.combo::after { content: ""; position: absolute; right: 1px; top: 1px; bottom: 1px; width: 12px; background: linear-gradient(#d4e3fc, #a4c0f0); }
.combo::before { content: ""; position: absolute; right: 3px; top: 9px; z-index: 1; border: 4px solid transparent; border-top-color: #000; border-bottom: 0; }
.zoom { width: 59px; margin: 0 2px 0 4px; }
.style { width: 82px; }
.face { width: 124px; }
.size { width: 52px; }
.bar .read { width: auto; gap: 3px; padding: 0 7px 0 4px; }
.bar .cap { width: 11px; height: 26px; background: linear-gradient(#7fa4e8, #2450a8); border-radius: 0 5px 5px 0; align-items: flex-end; padding-bottom: 5px; }
.cap::before { content: ""; border: 3px solid transparent; border-top-color: #fff; border-bottom: 0; }
.bar .ltr { font: 15px "Liberation Serif", serif; font-weight: bold; }
.boxed span, .shaded span { width: 15px; height: 15px; font-size: 14px; border: 1px solid #4a6ab0; line-height: 14px; }
.shaded span { background: #aaa; border-color: #aaa; }
.ring span { width: 16px; height: 16px; border: 1px solid #000; border-radius: 50%; font-size: 10px; line-height: 14px; }
.ruler-row { flex: none; height: 25px; display: flex; background: #d9e6fb; border-top: 1px solid #707888; }
.corner { width: 25px; flex: none; padding: 4px 0 0 5px; }
.corner button { display: block; width: 16px; height: 15px; border: 1px solid #4a6ab0; background: #e8f0fd; }
.corner button::before { content: ""; display: block; width: 6px; height: 6px; margin-left: 4px; border: solid #555; border-width: 0 0 2px 2px; }
.ruler { flex: 1; display: flex; position: relative; height: 12px; margin: 6px 0 0 97px; background: #fff; font: 11px/12px "Liberation Sans", sans-serif; white-space: nowrap; overflow: visible; }
.ruler span { width: 28px; flex: none; text-align: center; }
.ruler .edge { width: 35px; background: #9ebcf6; text-align: left; padding-left: 7px; margin-right: 17px; }
.ruler .rest { flex: 1; background: #9ebcf6; width: auto; }
.marks { position: absolute; left: 0; top: -4px; }
.work { flex: 1; min-height: 0; display: flex; overflow: hidden; }
.vruler { width: 25px; flex: none; background: linear-gradient(90deg, #d9e6fb 6px, #fff 6px 19px, #d9e6fb 19px); padding: 19px 6px 0; position: relative; font: 11px/13px "Liberation Sans", sans-serif; }
.vruler div { height: 32px; display: flex; flex-direction: column; align-items: center; justify-content: space-between; padding: 5px 0 6px; }
.vruler div::before, .vruler div::after { content: ""; width: 5px; height: 1px; background: #222; }
.vruler span { writing-mode: vertical-rl; transform: rotate(180deg); }
.vruler .edge { height: 35px; background: #9ebcf6; padding: 0 0 8px; }
.vruler .edge::before { display: none; }
.vruler .gap { height: 47px; padding: 8px 0 22px; }
.vmarks { position: absolute; left: 6px; top: 19px; }
.doc { flex: 1; min-width: 0; background: #9098ae; display: flex; flex-direction: column; padding-left: 95px; }
.prev { height: 4px; flex: none; background: #fff; border-bottom: 3px solid #000; border-left: 1px solid #000; }
.page { flex: 1; margin-top: 12px; background: #fff; border: solid #000; border-width: 1px 0 0 1px; padding: 37px 15px 0 36px; }
.sheet-wrap { position: relative; }
.sheet { width: 100%; border-collapse: collapse; table-layout: fixed; }
.sheet > tbody > tr > td { border: 1px solid #a8a8a8; padding: 0; }
.sheet .main { padding: 0 1px 0 4px; }
h1 { margin: 0; height: 30px; font: 20px/31px "DejaVu Sans Mono", monospace; color: #0000e0; display: flex; }
.data { width: 100%; border-collapse: collapse; table-layout: fixed; font: 10px/15px "DejaVu Sans Mono", "Noto Sans CJK SC", monospace; color: #000; }
.data td, .data th { height: 22px; border: 1px solid #000; padding: 0 0 0 2px; white-space: nowrap; text-align: left; overflow: hidden; }
.data .tall td { height: 23px; }
.data th, .data td:nth-child(3), .data td:nth-child(8) { font-size: 12px; }
.data th { background: #99ffcc; color: #0000d8; font-weight: bold; font-family: "Noto Sans CJK SC", sans-serif; }
.data th.pink { background: #ff99cc; }
.data th.lat { font: bold 12px "Liberation Serif", serif; }
.data td::after, .data th::after, .ret::after, h1::after { content: "↵"; font: 10px/9px "DejaVu Sans", sans-serif; color: #707070; }
.data td.tiny::after { content: "·"; }
h1::after { margin: 15px 0 0 1px; }
.c1 { width: 48px; } .c2 { width: 57px; } .c3 { width: 91px; } .c4 { width: 89px; } .c5 { width: 76px; } .c6 { width: 92px; } .c7 { width: 70px; } .c8 { width: 37px; } .c9 { width: 39px; } .c10 { width: 38px; }
mark { display: inline-block; background: #0f0; color: #000; line-height: 15px; }
.cy mark { background: #0ff; }
.dots { text-decoration: underline dotted #a040c0; text-underline-offset: 3px; }
.wavy { text-decoration: underline wavy #208020 1px; }
.data .caret::after { border-left: 2px solid #000; padding: 3px 0; }
.note p { height: 20px; display: flex; padding-left: 2px; font: 16px/18px "Noto Sans CJK SC", sans-serif; }
.low .note p { height: 19px; }
.blue p { color: #0000c8; }
.note p span { flex: none; }
.note p .w1 { width: 248px; } .note p .w2 { width: 224px; } .note p .w3 { width: 520px; }
.end { padding-left: 1px; }
.move { position: absolute; z-index: 1; left: -13px; top: -12px; }
.crop { position: absolute; top: -24px; height: 24px; width: 24px; border-bottom: 1px solid #a8a8a8; }
.crop.left { left: -23px; border-right: 1px solid #a8a8a8; }
.crop.right { right: -24px; border-left: 1px solid #a8a8a8; }
.resize { position: absolute; right: -6px; top: 380px; width: 7px; height: 7px; border: 1px solid #000; background: #fff; }
.callout { position: absolute; left: -2px; right: 36px; top: 73px; height: 28px; border: 3px solid #1fe01f; box-shadow: 1px 2px 4px rgba(0,0,0,.6), inset 1px 2px 4px rgba(0,0,0,.5); }
```
